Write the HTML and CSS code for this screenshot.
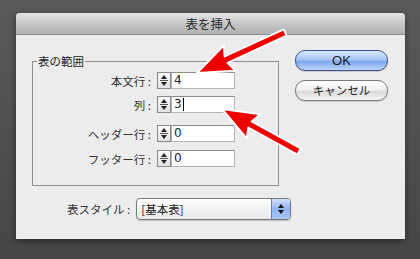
FILE: index.html
```html
<!DOCTYPE html>
<html lang="ja">
<head>
  <meta charset="UTF-8" />
  <meta name="viewport" content="width=device-width, initial-scale=1.0" />
  <title>表を挿入</title>
  <link rel="stylesheet" href="styles.css">
</head>
<body>
  <div class="dialog">
    <div class="titlebar">表を挿入</div>
    <div class="content">
      <div class="main">
        <fieldset class="group">
          <legend>表の範囲</legend>
          <div class="row">
            <span class="label">本文行 :</span>
            <span class="stepper"><i class="up"></i><i class="down"></i></span>
            <span class="field">4</span>
          </div>
          <div class="row">
            <span class="label">列 :</span>
            <span class="stepper"><i class="up"></i><i class="down"></i></span>
            <span class="field">3<b class="caret"></b></span>
          </div>
          <div class="row gap">
            <span class="label">ヘッダー行 :</span>
            <span class="stepper"><i class="up"></i><i class="down"></i></span>
            <span class="field">0</span>
          </div>
          <div class="row">
            <span class="label">フッター行 :</span>
            <span class="stepper"><i class="up"></i><i class="down"></i></span>
            <span class="field">0</span>
          </div>
        </fieldset>
        <div class="buttons">
          <button class="btn primary">OK</button>
          <button class="btn">キャンセル</button>
        </div>
      </div>
      <div class="style-row">
        <span class="label">表スタイル :</span>
        <div class="select">
          <span class="value">[基本表]</span>
          <span class="arrows"><i class="up"></i><i class="down"></i></span>
        </div>
      </div>
    </div>
  </div>

  <!-- red annotation arrows drawn over the screenshot -->
  <svg class="marks" width="420" height="259" viewBox="0 0 420 259">
    <g transform="translate(197 73) rotate(-24.7)">
      <polygon class="arrow" points="0,0 36,-14 32,-3.5 97,-3.5 97,3.5 32,3.5 36,14" />
    </g>
    <g transform="translate(222 109) rotate(28.9)">
      <polygon class="arrow" points="0,0 36,-14 32,-3.5 88,-3.5 88,3.5 32,3.5 36,14" />
    </g>
  </svg>
</body>
</html>
```

FILE: styles.css
```css
body {
  margin: 0;
  width: 420px;
  height: 259px;
  overflow: hidden;
  background: linear-gradient(#5a5a5a, #4e4e4e 60%, #454545);
  font-family: "Noto Sans CJK JP", "Noto Sans", sans-serif;
  color: #222;
  position: relative;
}
.dialog {
  margin: 13px 0 0 16px;
  width: 389px;
  height: 226px;
  background: #ececec;
  border-radius: 4px 4px 0 0;
  box-shadow: 0 2px 6px rgba(0, 0, 0, 0.45);
  display: flex;
  flex-direction: column;
}
.titlebar {
  height: 21px;
  line-height: 21px;
  text-align: center;
  font-size: 12.5px;
  color: #2a2a2a;
  background: linear-gradient(#e4e4e4, #c4c4c4 55%, #b1b1b1);
  border-bottom: 1px solid #8c8c8c;
  border-radius: 4px 4px 0 0;
}
.content {
  padding: 15px 0 0 16px;
}
.main {
  display: flex;
  align-items: flex-start;
  gap: 16px;
}
.group {
  margin: 4px 0 0 0;
  padding: 4px 0 18px 0;
  width: 245px;
  border: 1px solid #8e8e8e;
  border-radius: 0;
}
.group legend {
  margin-left: 4px;
  padding: 0 1px;
  font-size: 11.5px;
  line-height: 14px;
}
.row {
  display: flex;
  align-items: center;
  height: 17px;
  margin-bottom: 7px;
}
.row.gap {
  margin-top: 12px;
  margin-bottom: 8px;
}
.row:last-child {
  margin-bottom: 0;
}
.label {
  font-size: 11.5px;
  color: #333;
  white-space: pre;
}
.row .label {
  width: 118px;
  text-align: right;
  margin-right: 6px;
}
.stepper {
  width: 12px;
  height: 15px;
  border: 1px solid #8a8a8a;
  background: linear-gradient(#fafafa, #e2e2e2);
  display: flex;
  flex-direction: column;
  align-items: center;
  justify-content: space-between;
  padding: 0;
  position: relative;
}
.stepper::after {
  content: "";
  position: absolute;
  left: 2px;
  right: 2px;
  top: 7px;
  height: 1px;
  background: #555;
}
.up, .down {
  display: block;
  width: 0;
  height: 0;
  border-left: 3px solid transparent;
  border-right: 3px solid transparent;
}
.up {
  margin-top: 2px;
  border-bottom: 4px solid #222;
}
.down {
  margin-bottom: 2px;
  border-top: 4px solid #222;
}
.field {
  width: 60px;
  height: 15px;
  border: 1px solid #b4b4b4;
  border-top-color: #8c8c8c;
  background: #fff;
  font-family: "DejaVu Sans", sans-serif;
  font-size: 12px;
  line-height: 15px;
  padding-left: 2px;
  display: flex;
  align-items: center;
}
.caret {
  display: inline-block;
  width: 1px;
  height: 13px;
  background: #000;
  margin-left: 1px;
}
.buttons {
  display: flex;
  flex-direction: column;
  gap: 9px;
}
.btn {
  width: 93px;
  height: 21px;
  border-radius: 10px;
  border: 1px solid #7b7b7b;
  background: linear-gradient(#ffffff, #f0f0f0 45%, #dcdcdc 55%, #f4f4f4);
  font-family: "Noto Sans CJK JP", "Noto Sans", sans-serif;
  font-size: 11.5px;
  color: #1a1a1a;
  padding: 0;
  line-height: 19px;
  box-shadow: 0 1px 1px rgba(0, 0, 0, 0.15);
}
.btn.primary {
  border-color: #3e4f8e;
  background: linear-gradient(#d8e6fb, #a9c6f3 45%, #7ea8ea 55%, #bcd6fb);
  font-family: "Liberation Sans", sans-serif;
  font-size: 13px;
}
.style-row {
  display: flex;
  align-items: center;
  margin-top: 12px;
  padding-left: 35px;
}
.style-row .label {
  margin-right: 6px;
}
.select {
  width: 153px;
  height: 20px;
  border: 1px solid #7a7a7a;
  border-radius: 4px;
  background: linear-gradient(#ffffff, #f3f3f3 50%, #e8e8e8);
  display: flex;
  align-items: center;
  justify-content: space-between;
  box-shadow: 0 1px 1px rgba(0, 0, 0, 0.2);
  overflow: hidden;
}
.select .value {
  font-size: 11.5px;
  padding-left: 4px;
}
.select .arrows {
  width: 18px;
  height: 20px;
  border-left: 1px solid #6a7fb8;
  background: linear-gradient(#cfe0fb, #8fb2ee 50%, #a9c6f5);
  display: flex;
  flex-direction: column;
  align-items: center;
  justify-content: center;
  gap: 2px;
}
.select .up {
  margin: 0;
  border-bottom-color: #111;
}
.select .down {
  margin: 0;
  border-top-color: #111;
}
.marks {
  position: absolute;
  left: 0;
  top: 0;
  pointer-events: none;
}
.arrow {
  fill: #ee0000;
  stroke: #ffffff;
  stroke-width: 2;
  stroke-linejoin: round;
}
```
